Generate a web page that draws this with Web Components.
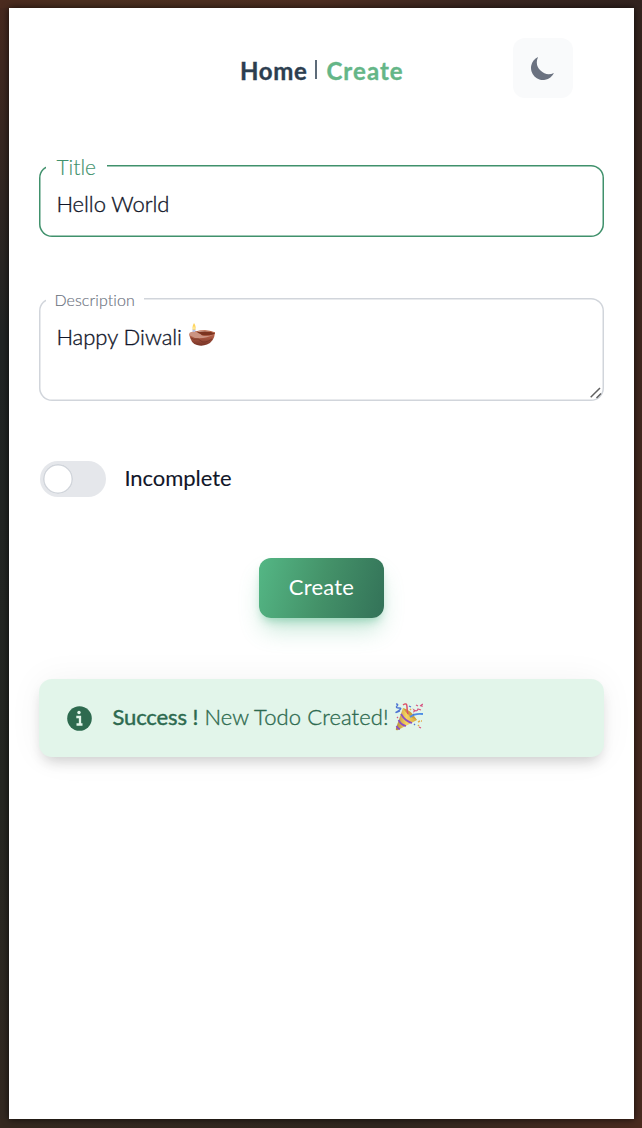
<!DOCTYPE html>
<html lang="en">
<head>
<meta charset="utf-8">
<title>Create Todo</title>
<style>
html,body{margin:0;height:100%}
body{font-family:Lato,"Liberation Sans",sans-serif;font-size:22px;color:#111629;overflow:hidden}
</style>
</head>
<body>
<todo-app></todo-app>
<script>
const define = (name, html) => customElements.define(name, class extends HTMLElement {
  constructor() {
    super();
    const t = document.createElement('template');
    t.innerHTML = html;
    this.attachShadow({mode: 'open'}).append(t.content.cloneNode(true));
  }
});

define('nav-bar', `<style>
:host{display:grid;grid-template-columns:473px 60px;height:60px}
nav{padding-left:200px;display:flex;align-items:center;color:#2c3e50;font-size:24px;font-weight:700;line-height:30px;padding-top:5px;box-sizing:border-box;white-space:pre;-webkit-text-stroke:.35px currentColor}
.home{width:67px;letter-spacing:.65px}
.bar{width:2px;height:19px;background:#5d6b79;margin:0 9px 2px 8.5px}
.create{color:#64b687;letter-spacing:1.05px}
button{border:0;padding:0;width:60px;height:60px;border-radius:12px;background:#f9fafb;display:grid;place-items:center}
svg{display:block}
</style><nav><span class="home">Home</span><span class="bar"></span><span class="create">Create</span></nav>
<button aria-label="Dark mode"><svg width="30" height="30" viewBox="0 0 20 20"><path fill="#6b7280" d="M17.293 13.293A8 8 0 016.707 2.707a8.001 8.001 0 1010.586 10.586z"/></svg></button>`);

define('outlined-field', `<style>
:host{display:block;position:relative;box-sizing:border-box;width:565px;height:72px;box-shadow:inset 0 0 0 1.5px var(--line,#d1d5db);border-radius:13px;padding:25px 16px 0 17px;line-height:28px;font-weight:300;-webkit-text-stroke:.35px currentColor}
.label{position:absolute;left:7px;top:-12px;height:28px;width:var(--gap,61px);background:#fff;box-sizing:border-box;padding-left:var(--inset,10px);font-size:var(--label-size,21px);color:var(--label,#6b7280);letter-spacing:var(--label-track,0);line-height:28px;white-space:nowrap;-webkit-text-stroke-width:.15px}
.value{display:flex;align-items:center;white-space:pre;letter-spacing:var(--track,0)}
</style><span class="label"><slot name="label"></slot></span><div class="value"><slot></slot></div><slot name="grip"></slot>`);

define('resize-grip', `<style>:host{position:absolute;right:1px;bottom:1px;width:13px;height:13px}svg{display:block}</style>
<svg width="13" height="13" viewBox="0 0 13 13" fill="none" stroke="#606060" stroke-width="1.5"><path d="M.7 10.3 10 1M6.5 11 11 6.5"/></svg>`);

define('diya-icon', `<style>:host{display:block;width:28px;height:28px;white-space:normal}svg{display:block}</style>
<svg width="28" height="28" viewBox="0 0 28 28"><defs><linearGradient id="b" x2="0" y2="1"><stop stop-color="#c36b50"/><stop offset="1" stop-color="#783326"/></linearGradient></defs>
<path d="M4.500 7h3v6h-3z" fill="#b7c1e8"/><path d="M6 1C4 4.500 4 8 6 8s2.300-3.500 0-7z" fill="#ffd45c"/><path d="M6 4q-1.500 3 0 3.500 1.300-.5 0-3.500z" fill="#fff3b0"/>
<path d="M1 12Q3 22 9 23Q14 24.500 19 22.500Q26 20 27 11Z" fill="url(#b)"/>
<ellipse cx="17" cy="11.300" rx="10" ry="2" fill="#7c3420"/><path d="M7 10Q17 7 27 10.800" stroke="#b65d3e" fill="none"/>
<path d="M1 13Q1 9 7 10Q12 11 14 13.500Q19 15 26 12.500Q18 17 7 16Z" fill="#cc9382"/><path d="M3 16q3 2 5 1t5 2 11-2" stroke="#743326" fill="none" stroke-width=".8"/></svg>`);

define('party-icon', `<style>:host{display:block;width:28px;height:28px;white-space:normal}svg{display:block}</style>
<svg width="28" height="28" viewBox="0 0 28 28" fill="none"><defs><linearGradient id="g"><stop stop-color="#b58a3a"/><stop offset=".5" stop-color="#f6d463"/><stop offset="1" stop-color="#d9ab40"/></linearGradient></defs>
<path d="M8 5Q14 8 22 17L3 27Q0 28 1 25Z" fill="url(#g)"/><path d="M6 11Q10 18 17 20M3.500 17Q6 22 11 23M1.500 23Q3 26 5 26" stroke="#8a4fc4" stroke-width="1.700"/>
<path d="M8 5Q15 6 22 17Q13 14 8 5Z" fill="#cfa03a"/><path d="M8 2q4-3 4 2t1 7" stroke="#de5068" stroke-width="1.500"/><path d="M15 14q5-4 13-3" stroke="#4d8de5" stroke-width="1.800"/>
<path d="M1 1q3 0 1 2t2 2-1 3 2 0M14 3l2 1M18 12l1-1M19 21l1 1" stroke="#4d75d3" stroke-width="1.300"/><path d="M18 9q2 0 1-2 3 2 4-1l3 1M21 2l2 1M25 3l3-2M27 1v3M2 14l1 1M24 24l2 1" stroke="#d75582" stroke-width="1.200"/><path d="M15 6l1 1M23 19l2-1M23 22l1 1M26 18h1" stroke="#e3ad4b" stroke-width="1.500"/></svg>`);

define('toggle-switch', `<style>
:host{display:flex;align-items:center;height:36px;gap:18.4px;line-height:28px;font-weight:400;letter-spacing:-.05px;-webkit-text-stroke:.1px currentColor}
.track{width:66px;height:36px;border-radius:18px;background:#e5e7eb;box-sizing:border-box;padding:3px}
.knob{box-sizing:border-box;width:30px;height:30px;border-radius:50%;background:#fff;box-shadow:inset 0 0 0 1.5px #d1d5db}
.text{padding-bottom:2px}
</style><span class="track"><div class="knob"></div></span><span class="text"><slot></slot></span>`);

define('action-button', `<style>
:host{display:block;width:125px;height:60px}
button{width:100%;height:100%;border:0;border-radius:12px;padding:0 0 3px;color:#fff;font:inherit;letter-spacing:.2px;background:linear-gradient(105deg,#54b785,#449269 50%,#337258);box-shadow:0 15px 23px -4px #52b78855,0 6px 9px -3px #52b78870}
</style><button><slot></slot></button>`);

define('success-alert', `<style>
:host{display:flex;align-items:center;box-sizing:border-box;width:565px;height:78px;padding:0 27px 0 27.600px;border-radius:13px;background:#e2f5ea;color:#2d6a4f;line-height:28px;white-space:pre;box-shadow:0 8px 14px -4px #0000002e,0 0 34px #0000000d}
.info{margin-right:20.400px;display:block}
strong{font-weight:400;width:92px;letter-spacing:-.1px;-webkit-text-stroke:.45px currentColor;padding-bottom:2px}
.text{width:191px;font-weight:300;letter-spacing:.1px;-webkit-text-stroke:.35px currentColor;padding-bottom:2px}
party-icon{margin-bottom:3px}
</style><svg class="info" width="25" height="25" viewBox="0 0 25 25"><circle cx="12.500" cy="12.500" r="12.300" fill="#2d6a4f"/><circle cx="12" cy="6.500" r="1.700" fill="#e2f5ea"/><path d="M9.300 11h3.700v7.500M9.500 18.500h6" stroke="#e2f5ea" stroke-width="2.300" fill="none"/></svg><strong><slot name="title"></slot></strong><span class="text"><slot></slot></span><party-icon></party-icon>`);

define('todo-app', `<style>
:host{display:block;box-sizing:border-box;width:642px;height:1128px;padding:8px 8px 9px 9px;background:linear-gradient(90deg,#4b2b1f 0,#4b3020 12%,#4d2e21 50%,#3b2721 75%,#32231f) top/100% 8px no-repeat,linear-gradient(90deg,#352920,#30271f 60%,#4a2b1f) bottom/100% 9px no-repeat,linear-gradient(#47291f,#202424 30%,#252722 70%,#342921) left/9px 100% no-repeat,linear-gradient(#33241f,#45291f 50%,#482b20) right/8px 100% no-repeat,#30251f}
main{box-sizing:border-box;width:625px;height:1111px;padding:30px 29px 0 30.4px;background:#fff;display:flex;flex-direction:column;box-shadow:0 0 7px #000b}
nav-bar{margin-left:.6px}
outlined-field{margin-top:67px}
.title{--line:#40916c;--label:#40916c;--label-track:0px;--track:-.05px}
.desc{height:103px;margin-top:61px;--gap:98px;--inset:8px;--label-size:16px;--label-track:.1px;--track:-.02px}
toggle-switch{margin-top:60px;margin-left:.6px}
action-button{margin-top:61px;margin-left:219.6px}
success-alert{margin-top:61px}
diya-icon{margin-left:6px;margin-top:-2px}
</style><main><nav-bar></nav-bar>
<outlined-field class="title"><span slot="label">Title</span>Hello World</outlined-field>
<outlined-field class="desc"><span slot="label">Description</span>Happy Diwali<diya-icon></diya-icon><resize-grip slot="grip"></resize-grip></outlined-field>
<toggle-switch>Incomplete</toggle-switch><action-button>Create</action-button>
<success-alert><span slot="title">Success !</span>New Todo Created!</success-alert></main>`);
</script>
</body>
</html>
